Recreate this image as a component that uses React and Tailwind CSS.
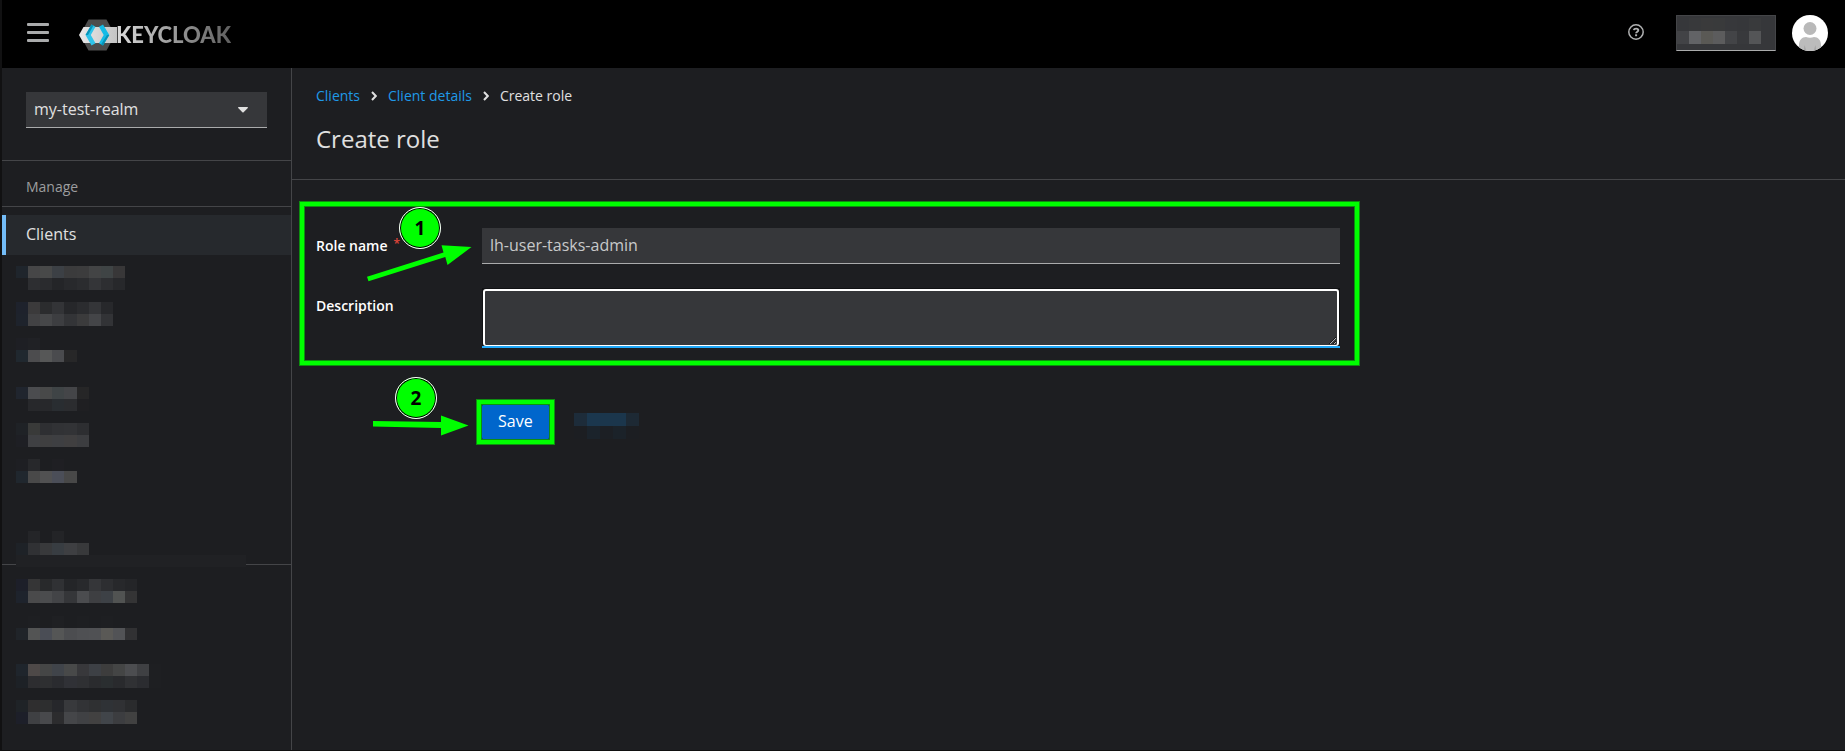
import React from "react";

const accountMosaic = [
  ["#36373a", "#38393b", "#3a3a3b", "#393a3b", "#37383b", "#36373a", "#393a3c", "#36373a"],
  ["#424346", "#626366", "#5a5955", "#5c5c5d", "#434447", "#38393c", "#545557", "#36373a"],
];

const cancelMosaic = [
  ["#1d2c3a", "#1b374e", "#1b364c", "#1b364c", "#1d2934"],
  ["#1c1e22", "#1b232b", "#1c1f24", "#1b2229", "#1c1e22"],
];

const manageItems = [
  {
    id: "scopes",
    gap: "mt-[11px]",
    rows: [
      ["#1f252c", "#464647", "#484949", "#3c4045", "#3b3b3c", "#3c3c3d", "#434445", "#3f4445", "#383738"],
      ["", "#2d2e31", "#2a2b2e", "#242528", "#28292c", "#2b2c2f", "#343538", "#2d2e31", "#27282b"],
    ],
  },
  {
    id: "roles",
    gap: "mt-3",
    rows: [
      ["#1e222c", "#3b3a3b", "#2b2c2e", "#333437", "#26272a", "#2b2c2f", "#343538", "#27282b"],
      ["#1e232c", "#424244", "#464749", "#3d3e41", "#333437", "#3b3b3c", "#444548", "#323336"],
    ],
  },
  {
    id: "users",
    gap: "mt-3",
    rows: [
      ["#1e1f24", "#202125"],
      ["#20282f", "#4c4c4e", "#565757", "#4a4b4e", "#272728"],
    ],
  },
  {
    id: "groups",
    gap: "mt-[25px]",
    rows: [
      ["#20252e", "#4b4c4f", "#484949", "#3f4446", "#444548", "#262627"],
      ["", "#27282b", "#27282b", "#292d31", "#2b2c2f", "#1f1f22"],
    ],
  },
  {
    id: "sessions",
    gap: "mt-3",
    rows: [
      ["#1f2226", "#393a39", "#2e2f32", "#313235", "#323336", "#2d2e31"],
      ["#1e1f24", "#3f4043", "#3f3f40", "#3e3f42", "#403f40", "#3c3d40"],
    ],
  },
  {
    id: "events",
    gap: "mt-3",
    rows: [
      ["#1e1f23", "#27282b", "", "#1f1f23"],
      ["#20272e", "#494949", "#515152", "#4b4e58", "#484848"],
    ],
  },
];

const configureTitle = [
  ["", "#242528", "", "#232427"],
  ["#1e2227", "#303134", "#38393b", "#383d42", "#3e3f42", "#38393b"],
];

const configureItems = [
  {
    id: "settings",
    gap: "mt-3",
    rows: [
      ["#1d1f29", "#353536", "#28292b", "#303134", "#242528", "#28292c", "#353639", "#2d2e31", "#27282b", "#242528"],
      ["#1e232c", "#4a4a4b", "#4b4c4e", "#434447", "#353639", "#4b4c4f", "#3e3f42", "#3d4146", "#515352", "#343435"],
    ],
  },
  {
    id: "authentication",
    gap: "mt-[13px]",
    rows: [
      ["", "#1e1f22", "#1d1e21", "#1f2023", "", "#1e1f22", "", "#1e1f22"],
      ["#202429", "#535454", "#4a4d55", "#555656", "#4c4d50", "#4f5053", "#505154", "#5a5956", "#525356", "#313133"],
    ],
  },
  {
    id: "providers",
    gap: "mt-6",
    rows: [
      ["#1f252c", "#4e4948", "#454646", "#40444a", "#484949", "#38383b", "#3d4045", "#3d3d3d", "#444545", "#4c4d50", "#3f4043", "#1e1f22"],
      ["#1d2126", "#2d2d30", "#2e2f31", "#2a2b2f", "#303136", "#2f3033", "#2a2b2e", "#2a2e30", "#292a2d", "#303134", "#2b2c30", "#1e1f22"],
    ],
  },
  {
    id: "federation",
    gap: "mt-3",
    rows: [
      ["#1f2327", "#2f2e2f", "#2d2e2f", "#26272b", "#38393c", "#323336", "#2f3032", "#2f3236", "#303134", "#2a2b2d"],
      ["#1d1f29", "#3f4043", "#48494c", "#2c2c2e", "#454649", "#404144", "#424141", "#41454a", "#3c3d40", "#414141"],
    ],
  },
];

function Mosaic({ rows, cell = "h-3 w-3 nth-5:w-[13px]" }) {
  return (
    <span className="flex flex-col" aria-hidden="true">
      {rows.map((row, y) => (
        <span key={y} className="flex">
          {row.map((color, x) => (
            <span key={x} className={cell} style={{ backgroundColor: color || "transparent" }} />
          ))}
        </span>
      ))}
    </span>
  );
}

function Logo() {
  return (
    <a href="#home" aria-label="Keycloak" className="flex items-center">
      <svg width="38" height="32" viewBox="0 0 38 32">
        <defs>
          <linearGradient id="bar" x1="0" x2="1">
            <stop offset="0" stopColor="#e9e9e9" />
            <stop offset="1" stopColor="#c4c4c4" />
          </linearGradient>
        </defs>
        <path d="M9.500 0.500h18L36 16l-8.500 15.500h-18L1 16z" fill="#4d4d4d" />
        <path d="M4.500 8H38v16H4.500L0 16z" fill="url(#bar)" />
        <path d="M12.500 5.500l4 2.200-4.700 8.300 4.700 8.300-4 2.200L6.500 16z" fill="#2fc4ea" />
        <path d="M6.500 16l6-10.500 2 1.100L9 16z" fill="#0793b8" />
        <path d="M24 5.500l-4 2.200 4.700 8.300-4.700 8.300 4 2.200L30.300 16z" fill="#15bbe6" />
        <path d="M30.300 16H28l-6 9.400 2 1.100z" fill="#0793b8" />
      </svg>
      <span className="-ml-px bg-linear-to-r from-[#dcdcdc] to-[#5f5f5f] bg-clip-text font-['Lato',sans-serif] text-[22px] leading-8 font-black text-transparent">
        KEYCLOAK
      </span>
    </a>
  );
}

function Header() {
  return (
    <header className="flex h-17 items-start justify-between bg-black pr-[17px] pl-[25px]">
      <div className="flex items-start">
        <button type="button" aria-label="Global navigation" className="mt-[23px] flex w-[22px] flex-col gap-[5px]">
          <span className="h-[3px] w-full rounded-[1px] bg-[#aaabac]" />
          <span className="h-[3px] w-full rounded-[1px] bg-[#aaabac]" />
          <span className="h-[3px] w-full rounded-[1px] bg-[#aaabac]" />
        </button>
        <div className="mt-[19px] ml-[30px]">
          <Logo />
        </div>
      </div>

      <div className="flex items-start">
        <button type="button" aria-label="Help" className="mt-6">
          <svg width="16" height="16" viewBox="0 0 16 16" fill="none" stroke="#b0b1b2">
            <circle cx="8" cy="8" r="7.200" strokeWidth="1.500" />
            <path d="M5.800 6.200C6 5 7 4.600 8.100 4.600c1.300 0 2.200.7 2.200 1.700C10.300 7.700 8.100 7.700 8.100 9.300" strokeWidth="1.900" />
            <path d="M8.100 10.300v1.900" strokeWidth="2" />
          </svg>
        </button>
        <button
          type="button"
          aria-label="Account menu"
          className="mt-[15px] ml-8 flex h-9 w-25 items-start border border-[#444548] border-b-[#aaabac] bg-[#36373a] pt-0.5"
        >
          <Mosaic rows={accountMosaic} cell="h-[13px] w-3" />
        </button>
        <svg className="mt-[15px] ml-4" width="36" height="36" viewBox="0 0 36 36" role="img" aria-label="Avatar">
          <defs>
            <clipPath id="avatar">
              <circle cx="18" cy="18" r="18" />
            </clipPath>
          </defs>
          <g clipPath="url(#avatar)">
            <rect width="36" height="36" fill="#fff" />
            <circle cx="18" cy="13.500" r="6.500" fill="#b9b9b9" />
            <path d="M7 36v-6c0-5 3-8 7-8 2.500 1 5.500 1 8 0 4 0 7 3 7 8v6z" fill="#bcbcbc" />
            <path d="M11.500 36l1-6 2 6zM24.500 36l-1-6-2 6z" fill="#a8a8a8" />
          </g>
        </svg>
      </div>
    </header>
  );
}

function NavMosaic({ items }) {
  return (
    <ul className="flex flex-col">
      {items.map((item) => (
        <li key={item.id} className={item.gap}>
          <a href={`#${item.id}`} aria-label={item.id} className="block pl-3.5">
            <Mosaic rows={item.rows} />
          </a>
        </li>
      ))}
    </ul>
  );
}

function Sidebar() {
  return (
    <aside className="w-[290px] shrink-0 border-r border-[#444548]">
      <div className="border-b border-[#444548] px-6 pt-6 pb-8">
        <button
          type="button"
          className="flex h-9 w-full items-center justify-between border-b border-[#aaabac] bg-[#36373a] pr-[19px] pb-0.5 pl-2 text-base text-[#e0e0e0]"
        >
          my-test-realm
          <svg className="mt-0.5" width="10" height="6" viewBox="0 0 10 6" fill="#e0e0e0">
            <path d="M0.600 0h8.800c.5 0 .7.5.4.900L5.600 5.300c-.3.300-.9.300-1.200 0L.2.900C-.1.500.100 0 .6 0z" />
          </svg>
        </button>
      </div>

      <nav aria-label="Manage">
        <h2 className="flex h-[46px] items-center border-b border-[#444548] px-6 pt-1.5 text-sm text-[#9c9d9f]">
          Manage
        </h2>
        <a
          href="#clients"
          className="mt-2 flex h-10 items-center border-l-4 border-[#73bcf7] bg-[#26292d] pb-0.5 pl-5 text-base text-[#e0e0e0]"
        >
          Clients
        </a>
        <NavMosaic items={manageItems} />
      </nav>

      <nav aria-label="Configure" className="mt-12">
        <div className="pl-3.5">
          <Mosaic rows={configureTitle} />
        </div>
        <div className="flex h-3 items-center">
          <span className="mt-1.5 h-px w-3.5 bg-[#444548]" />
          <span className="h-3 w-[230px] bg-[#202124]" />
          <span className="mt-1.5 h-px flex-1 bg-[#444548]" />
        </div>
        <NavMosaic items={configureItems} />
      </nav>
    </aside>
  );
}

function Separator() {
  return (
    <svg width="6" height="10" viewBox="0 0 6 10" fill="none" stroke="#e0e0e0" strokeWidth="2" aria-hidden="true">
      <path d="M1 1l3.800 4L1 9" />
    </svg>
  );
}

function StepBadge({ number, className }) {
  return (
    <span
      className={`absolute flex h-[42px] w-[42px] items-center justify-center rounded-full border border-white bg-[#00ff00] font-['Noto_Sans',sans-serif] text-[19px] font-bold text-black inset-ring inset-ring-black ${className}`}
    >
      {number}
    </span>
  );
}

const frame =
  "border-4 border-[#00ff00] shadow-[0_0_0_1px_#0e8e10,inset_0_0_0_1px_#0e8e10]";

function RoleForm() {
  return (
    <form className="flex flex-col" onSubmit={(e) => e.preventDefault()}>
      <div className="relative flex max-w-[1072px] flex-col gap-6 px-6 pt-12 pb-8">
        <div className="flex">
          <label htmlFor="role-name" className="flex w-[166px] shrink-0 pt-2 text-sm font-semibold text-white">
            Role name
            <span className="ml-1.5 text-xs text-[#e0453a]">*</span>
          </label>
          <input
            id="role-name"
            type="text"
            defaultValue="lh-user-tasks-admin"
            className="h-9 min-w-0 flex-1 border-b border-[#aaabac] bg-[#36373a] px-2 pb-0.5 text-base text-[#c8c9ca] outline-none"
          />
        </div>
        <div className="flex">
          <label htmlFor="description" className="w-[166px] shrink-0 pt-2 text-sm font-semibold text-white">
            Description
          </label>
          <div className="flex min-w-0 flex-1 border-b-2 border-[#1fa7f8] bg-[#111214] px-px pt-px">
            <textarea
              id="description"
              className="h-[57px] w-full resize-y rounded-[3px] border-2 border-b border-white bg-[#36373a] px-2 text-base text-[#e0e0e0] outline-none"
            />
          </div>
        </div>
        <div className={`pointer-events-none absolute top-[22px] right-[5px] bottom-[15px] left-2 ${frame}`} />
        <StepBadge number={1} className="top-[27px] left-[107px]" />
        <svg className="absolute top-[65px] left-[74px]" width="108" height="38" viewBox="0 0 108 38" aria-hidden="true">
          <path d="M1 31.800l1.500 4.500L79.300 12l2.200 8L105.500 2 75.500.300l2 7.200z" fill="#00ff00" />
        </svg>
      </div>

      <div className="relative flex items-start pt-6 pl-[190px]">
        <button type="submit" className="h-9 rounded-[3px] bg-[#0066cc] px-4 pb-0.5 text-base text-white">
          Save
        </button>
        <button type="button" aria-label="Cancel" className="mt-[9px] ml-[25px]">
          <Mosaic rows={cancelMosaic} cell="h-[13px] w-[13px]" />
        </button>
        <div className={`pointer-events-none absolute top-[20px] left-[185px] h-[44px] w-[77px] ${frame}`} />
        <StepBadge number={2} className="-top-[3px] left-[103px]" />
        <svg className="absolute top-[35px] left-[81px]" width="98" height="22" viewBox="0 0 98 22" aria-hidden="true">
          <path d="M0 6l68 1V.500L95.500 10.500 68 20.500V13L0 11.500z" fill="#00ff00" />
        </svg>
      </div>
    </form>
  );
}

export default function App() {
  return (
    <div className="flex min-h-screen flex-col border-b border-l-2 border-b-[#0f0f10] border-l-[#111112] bg-[#1d1e21] font-['Open_Sans',sans-serif] text-[#e0e0e0]">
      <Header />
      <div className="flex flex-1">
        <Sidebar />
        <main className="min-w-0 flex-1">
          <section className="border-b border-[#444548] px-6 pt-4 pb-6">
            <nav aria-label="Breadcrumb" className="flex items-center gap-[11px] pt-0.5 text-sm">
              <a href="#clients" className="text-[#1f99e8]">Clients</a>
              <Separator />
              <a href="#details" className="text-[#1f99e8]">Client details</a>
              <Separator />
              <span aria-current="page">Create role</span>
            </nav>
            <h1 className="mt-4 text-2xl leading-[33px]">Create role</h1>
          </section>
          <RoleForm />
        </main>
      </div>
    </div>
  );
}
